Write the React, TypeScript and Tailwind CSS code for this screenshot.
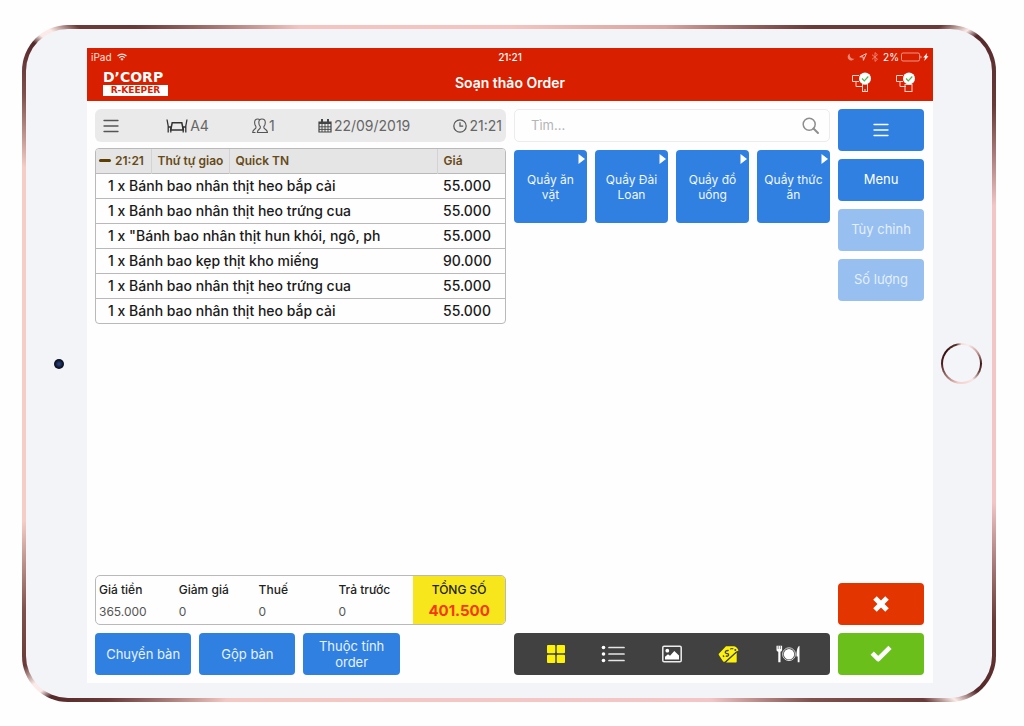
import React from 'react';

const ORDER_ITEMS = [
  { name: '1 x Bánh bao nhân thịt heo bắp cải', price: '55.000' },
  { name: '1 x Bánh bao nhân thịt heo trứng cua', price: '55.000' },
  { name: '1 x "Bánh bao nhân thịt hun khói, ngô, ph', price: '55.000' },
  { name: '1 x Bánh bao kẹp thịt kho miếng', price: '90.000' },
  { name: '1 x Bánh bao nhân thịt heo trứng cua', price: '55.000' },
  { name: '1 x Bánh bao nhân thịt heo bắp cải', price: '55.000' },
];

const TOTALS = [
  { label: 'Giá tiền', value: '365.000' },
  { label: 'Giảm giá', value: '0' },
  { label: 'Thuế', value: '0' },
  { label: 'Trả trước', value: '0' },
];

const CATEGORIES = ['Quầy ăn vặt', 'Quầy Đài Loan', 'Quầy đồ uống', 'Quầy thức ăn'];

const MenuLines = ({ className }: { className: string }) => (
  <svg className={className} viewBox="0 0 16 14" fill="none" stroke="currentColor" strokeWidth={1.3}>
    <path strokeLinecap="round" d="M1 1.5h14M1 7h14M1 12.5h14" />
  </svg>
);

const WifiIcon = () => (
  <svg className="w-3 h-2" viewBox="0 0 12 9" fill="none" stroke="currentColor" strokeWidth={1.4}>
    <path d="M1 3.4a7.2 7.2 0 0 1 10 0M2.9 5.3a4.5 4.5 0 0 1 6.2 0" />
    <path d="M4.2 6.7a2.6 2.6 0 0 1 3.6 0L6 8.7z" fill="currentColor" stroke="none" />
  </svg>
);

const TableIcon = () => (
  <svg className="w-[22px] h-4" viewBox="0 0 22 16" fill="none" stroke="#333" strokeWidth={1.3}>
    <path d="M1 1.500l1.200 6.500v6.500M2.200 9h2.600v5.500M21 1.500l-1.200 6.500v6.500M19.800 9h-2.600v5.500" />
    <path d="M6.200 4.800h9.600l1.500 7.200H4.700z" strokeWidth={1.5} />
  </svg>
);

const GuestsIcon = () => (
  <svg className="w-4 h-4" viewBox="0 0 16 16" fill="none" stroke="#555" strokeWidth={1.1} strokeLinejoin="round">
    <path d="M10 1c2 0 3.300 1.300 3.300 3.600 0 1.700-.5 3-1.400 3.900v1.400c.3 1.200 3.300 1.200 3.600 4.600H5.300c.2-3.400 2.700-3.400 3-4.600V8.500C7.300 7.600 6.800 6.300 6.800 4.600 6.800 2.300 8 1 10 1z" />
    <path d="M7.800 1.800C7.300 1.300 6.500 1 5.700 1 3.700 1 2.600 2.400 2.600 4.500c0 1.800.5 3 1.300 3.900v1.500c-.3 1.200-3 1.400-3.300 4.600h2.900" />
  </svg>
);

const CalendarIcon = () => (
  <svg className="w-3.5 h-3.5" viewBox="0 0 14 14" fill="none" stroke="#444">
    <path d="M1 3h12v10H1z" strokeWidth={1.2} />
    <path d="M1 4h12" strokeWidth={2} />
    <path d="M4 5v8M7 5v8M10 5v8M1 7.800h12M1 10.400h12" strokeWidth={0.9} />
    <path d="M4 .5v3M10 .5v3" strokeWidth={2} strokeLinecap="round" />
  </svg>
);

const ClockIcon = () => (
  <svg className="w-3.5 h-3.5" viewBox="0 0 14 14" fill="none" stroke="#555" strokeWidth={1.2}>
    <circle cx="7" cy="7" r="6.2" />
    <path d="M7 3.200V7.200h3.200" />
  </svg>
);

const MoonIcon = () => (
  <svg className="w-2 h-2" viewBox="0 0 8 8" fill="#f08a78">
    <path d="M3 .5a3.600 3.600 0 1 0 4.500 5A3.700 3.700 0 0 1 3 .5z" />
  </svg>
);

const LocationIcon = () => (
  <svg className="w-2 h-2" viewBox="0 0 8 8" fill="none" stroke="#f8c4ba" strokeWidth={1}>
    <path d="M.8 3.800L7.400.6 4.400 7.300 4.100 3.900z" />
  </svg>
);

const BluetoothIcon = () => (
  <svg className="w-2 h-2.5" viewBox="0 0 8 10" fill="none" stroke="#f08a78" strokeWidth={0.9}>
    <path d="M1 2.700l5.500 4.500L4 9.400V.6l2.500 2.200L1 7.300" />
  </svg>
);

const BatteryIcon = () => (
  <svg className="w-7 h-2.5" viewBox="0 0 28 10">
    <rect x="0.500" y="1" width="18" height="8" rx="1.500" fill="none" stroke="#f6b5a8" strokeWidth={0.8} />
    <path d="M19.500 3.500v3c1.300-.4 1.300-2.600 0-3z" fill="#f8c4ba" />
    <path d="M26.200 1l-4 4.500h1.900L23.200 9l4.300-4.700h-2z" fill="#fff" />
  </svg>
);

const DeviceStatusIcon = ({ phone }: { phone?: boolean }) => (
  <svg className="w-5 h-5" viewBox="0 0 20 20" fill="none" stroke="#ffd2ca" strokeWidth={1}>
    <path d="M8 3.500H1.500v6H8M5 9.500v5h6" />
    {phone ? <rect x="11.500" y="12" width="5" height="7.500" /> : <rect x="10" y="12.500" width="7" height="7" />}
    {phone && <path d="M13 18h2" />}
    <circle cx="14" cy="6.500" r="6" fill="#fff" stroke="none" />
    <path d="M11 6.500l2.300 2.300 4-4.300" stroke="#4cb648" strokeWidth={1.2} />
  </svg>
);

const SearchIcon = () => (
  <svg className="w-[17px] h-[17px]" viewBox="0 0 17 17" fill="none" stroke="#8e8e8e" strokeWidth={1.5}>
    <circle cx="7.200" cy="7.200" r="6" />
    <path d="M11.500 11.500l4.500 4.500" strokeWidth={1.900} strokeLinecap="round" />
  </svg>
);

const GridIcon = () => (
  <svg className="w-[18px] h-[18px]" viewBox="0 0 18 18" fill="#fdf20a">
    <rect width="8.300" height="8.300" rx="1" />
    <rect x="9.700" width="8.300" height="8.300" rx="1" />
    <rect y="9.700" width="8.300" height="8.300" rx="1" />
    <rect x="9.700" y="9.700" width="8.300" height="8.300" rx="1" />
  </svg>
);

const ListIcon = () => (
  <svg className="w-6 h-[18px]" viewBox="0 0 24 18" fill="#fff" stroke="#e6e6e6" strokeWidth={1.7}>
    <path d="M8 2.500h15M8 9h15M8 15.500h15" strokeLinecap="round" />
    <g stroke="none">
      <circle cx="2.500" cy="2.500" r="1.800" />
      <circle cx="2.500" cy="9" r="1.800" />
      <circle cx="2.500" cy="15.500" r="1.800" />
    </g>
  </svg>
);

const PictureIcon = () => (
  <svg className="w-5 h-[18px]" viewBox="0 0 20 18">
    <rect x="0.800" y="1.300" width="18.400" height="15.400" rx="1.300" fill="none" stroke="#ededed" strokeWidth={1.5} />
    <circle cx="5.300" cy="5.700" r="1.900" fill="#fff" />
    <path d="M3 14.500v-2.800l3-2.500 2 1.500 4.300-4.700 4.700 4.500v4z" fill="#fff" />
  </svg>
);

const PriceTagIcon = () => (
  <svg className="w-[22px] h-[18px]" viewBox="0 0 22 18">
    <path d="M8 1.200h7.500c2.300 0 4 1.700 5 4.300l-2.700 1.300L7 16.500c-.7.500-1.500.4-2-.3L1 10.300c-.5-.8-.4-1.500.3-2.100z" fill="#fdf20a" />
    <path d="M18.700 7.500v9c0 .6-.4 1-1 1H8z" fill="#fdf20a" />
    <path d="M10 6c-2-.9-3.300.7-2.500 1.900.8 1.100 2.300.2 3 1.300.6 1.400-1.200 2.700-2.700 1.600M5 10.500l1 1.400M10.400 4.800l-.6 1" stroke="#414141" strokeWidth={1.300} fill="none" />
    <path d="M12.300 4.300c1-.9 2.100-1 3-.4" stroke="#414141" strokeWidth={1.200} fill="none" />
    <circle cx="17.300" cy="5" r="1" fill="#414141" />
    <path d="M18.300 7.200L8 16.800" stroke="#414141" strokeWidth={0.800} />
  </svg>
);

const DishIcon = () => (
  <svg className="w-6 h-[18px]" viewBox="0 0 24 18" fill="#fff">
    <path d="M.5.800h5.600V4.800c0 1-.7 1.700-1.600 1.900v10.500H2.300V6.700C1.200 6.500.5 5.800.5 4.800z" />
    <path d="M2.200.8v3.200M4.400.8v3.200" stroke="#414141" strokeWidth={0.6} />
    <circle cx="13" cy="9.200" r="6.400" fill="none" stroke="#d8d8d8" strokeWidth={1} />
    <circle cx="13" cy="9.200" r="5.200" />
    <path d="M23.500.800v16.400h-1.800v-5.800h-1.200c0-5 .6-9.300 3-10.600z" />
  </svg>
);

const VIEW_MODES = [
  { label: 'Grid', icon: <GridIcon /> },
  { label: 'List', icon: <ListIcon /> },
  { label: 'Pictures', icon: <PictureIcon /> },
  { label: 'Prices', icon: <PriceTagIcon /> },
  { label: 'Dishes', icon: <DishIcon /> },
];

const Header = () => (
  <header className="h-[53px] bg-[#d81f00] text-white">
    <div className="grid grid-cols-3 items-center h-[18px] px-1 text-[10px] leading-none text-[#ffe3de]">
      <div className="flex items-center gap-1">
        <span>iPad</span>
        <WifiIcon />
      </div>
      <span className="text-center font-medium text-white">21:21</span>
      <div className="flex items-center justify-end gap-1">
        <MoonIcon />
        <LocationIcon />
        <BluetoothIcon />
        <div className="flex items-center gap-0.5">
          <span className="text-white">2%</span>
          <BatteryIcon />
        </div>
      </div>
    </div>
    <div className="grid grid-cols-3 items-center h-8 px-4">
      <div className="flex flex-col items-start font-['DejaVu_Sans',sans-serif] font-bold">
        <span className="text-[14px] leading-4">D’CORP</span>
        <span className="w-[65px] bg-white text-center text-[9px] leading-[11px] text-[#d81f00]">R-KEEPER</span>
      </div>
      <h1 className="text-center text-[14px] font-semibold">Soạn thảo Order</h1>
      <div className="flex justify-end gap-6 pr-0.5">
        <DeviceStatusIcon phone />
        <DeviceStatusIcon />
      </div>
    </div>
  </header>
);

const OrderPanel = () => (
  <section className="flex flex-col">
    <div className="flex items-center justify-between h-[33px] rounded-md bg-[#eaeaea] pl-2 pr-1 text-[14px] text-[#666]">
      <button type="button" aria-label="Menu" className="text-[#555]">
        <MenuLines className="w-4 h-3.5" />
      </button>
      <span className="flex items-center gap-0.5 pl-1">
        <TableIcon />
        A4
      </span>
      <span className="flex items-center gap-px">
        <GuestsIcon />1
      </span>
      <span className="flex items-center gap-0.5">
        <CalendarIcon />
        22/09/2019
      </span>
      <span className="flex items-center gap-0.5">
        <ClockIcon />
        21:21
      </span>
    </div>

    <div className="mt-1.5 overflow-hidden rounded-[4px] border border-[#b9b9b9]">
      <table className="w-full table-fixed border-collapse text-left">
        <colgroup>
          <col className="w-[55px]" />
          <col className="w-[78px]" />
          <col />
          <col className="w-[68px]" />
        </colgroup>
        <thead>
          <tr className="h-6 bg-[#e5e5e5] text-[12px] leading-4 text-[#664a17]">
            <th className="border-r border-[#d3d3d3] pl-[3px] font-semibold">
              <span className="flex items-center gap-1">
                <span className="w-3 h-[3px] rounded-full bg-[#5d3f04]" />
                21:21
              </span>
            </th>
            <th className="border-r border-[#d3d3d3] pl-1.5 font-semibold whitespace-nowrap">Thứ tự giao</th>
            <th className="border-r border-[#d3d3d3] pl-1.5 font-semibold">Quick TN</th>
            <th className="pl-1.5 font-semibold">Giá</th>
          </tr>
        </thead>
        <tbody>
          {ORDER_ITEMS.map((item, index) => (
            <tr key={index} className="h-[25px] border-t border-[#b9b9b9] text-[14px] leading-5 font-medium text-[#1a1a1a]">
              <td colSpan={3} className="pl-3 whitespace-nowrap">
                {item.name}
              </td>
              <td className="pl-1.5">{item.price}</td>
            </tr>
          ))}
        </tbody>
      </table>
    </div>

    <dl className="mt-auto grid grid-cols-[80fr_80fr_80fr_78fr_92fr] h-[50px] overflow-hidden rounded-[5px] border border-[#b9b9b9] text-[12px]">
      {TOTALS.map((total) => (
        <div key={total.label} className="flex flex-col justify-between pt-[5px] pb-[3px] pl-[3px]">
          <dt className="font-medium text-[#222]">{total.label}</dt>
          <dd className="text-[#555]">{total.value}</dd>
        </div>
      ))}
      <div className="flex flex-col justify-between bg-[#f7e61b] pt-[5px] pb-[3px] text-center">
        <dt className="font-medium text-[#222]">TỔNG SỐ</dt>
        <dd className="text-[15px] leading-5 font-bold text-[#f5380f]">401.500</dd>
      </div>
    </dl>

    <div className="mt-2 grid grid-cols-[96fr_96fr_96fr_98fr] gap-2 h-[42px] text-[13px] leading-4 text-[#e8f2ff]">
      <button type="button" className="rounded-[4px] bg-[#2f80e1]">Chuyển bàn</button>
      <button type="button" className="rounded-[4px] bg-[#2f80e1]">Gộp bàn</button>
      <button type="button" className="rounded-[4px] bg-[#2f80e1] px-2">Thuộc tính order</button>
    </div>
  </section>
);

const CatalogPanel = () => (
  <section className="flex flex-col">
    <div className="flex items-center h-[33px] rounded-[5px] border border-[#ececec] pl-4 pr-2.5">
      <input
        type="text"
        aria-label="Tìm"
        placeholder="Tìm..."
        className="flex-1 min-w-0 text-[13px] outline-none placeholder:text-[#b5b5b5]"
      />
      <button type="button" aria-label="Search">
        <SearchIcon />
      </button>
    </div>

    <div className="mt-2 grid grid-cols-4 gap-2">
      {CATEGORIES.map((category) => (
        <button
          key={category}
          type="button"
          className="relative aspect-square rounded-[4px] bg-[#2f80e1] px-1 text-[12px] leading-[15px] text-[#f2f7ff]"
        >
          <svg className="absolute top-1 right-0.5 w-[7px] h-[10px]" viewBox="0 0 7 10" fill="#fff">
            <path d="M.5 0v10L7 5z" />
          </svg>
          {category}
        </button>
      ))}
    </div>

    <nav className="mt-auto flex items-center justify-between h-[42px] rounded-[4px] bg-[#414141] pl-[33px] pr-[30px]">
      {VIEW_MODES.map((mode) => (
        <button key={mode.label} type="button" aria-label={mode.label} className="flex">
          {mode.icon}
        </button>
      ))}
    </nav>
  </section>
);

const ActionPanel = () => (
  <aside className="flex flex-col gap-2 text-[13px] text-white">
    <button type="button" aria-label="Menu" className="flex items-center justify-center h-[42px] rounded-[4px] bg-[#2f80e1]">
      <MenuLines className="w-4 h-3.5" />
    </button>
    <button type="button" className="h-[42px] rounded-[4px] bg-[#2f80e1]">Menu</button>
    <button type="button" className="h-[42px] rounded-[4px] bg-[#97bff0] text-[#e4effc]">Tùy chỉnh</button>
    <button type="button" className="h-[42px] rounded-[4px] bg-[#97bff0] text-[#e4effc]">Số lượng</button>
    <button type="button" aria-label="Cancel" className="mt-auto flex items-center justify-center h-[42px] rounded-[4px] bg-[#e23500]">
      <svg className="w-[18px] h-[18px]" viewBox="0 0 18 18" fill="none" stroke="#fff" strokeWidth={5}>
        <path strokeLinejoin="round" d="M3 3l12 12M15 3L3 15" />
      </svg>
    </button>
    <button type="button" aria-label="Confirm" className="flex items-center justify-center h-[42px] rounded-[4px] bg-[#6abf1b]">
      <svg className="w-[22px] h-[18px]" viewBox="0 0 22 18" fill="none" stroke="#fff" strokeWidth={4.600}>
        <path strokeLinejoin="round" d="M2.200 8.200l6 6L20 2.400" />
      </svg>
    </button>
  </aside>
);

const HomeButton = () => (
  <button
    type="button"
    aria-label="Home"
    className="w-[41px] h-[41px] rounded-full p-0.5 bg-[conic-gradient(#f6dcd9,#fbeeee_20deg,#c99a96_55deg,#3a1518_90deg,#6d4340_115deg,#f9e4e2_145deg,#f3cfcc_190deg,#b08581_220deg,#4a1c1e_270deg,#35100f_310deg,#5c3330_345deg,#f6dcd9)]"
  >
    <span className="block w-full h-full rounded-full bg-[#f4f5f9]" />
  </button>
);

const App = () => {
  return (
    <div className="flex min-h-screen bg-[#fefefe] pt-[25px] pr-7 pb-6 pl-[22px] font-['Inter','Liberation_Sans',sans-serif]">
      <div className="flex flex-1 rounded-[46px] p-1 bg-[conic-gradient(#f4c5c0,#d9a5a0_25deg,#6a3a38_42deg,#6a3a38_52deg,#fbeae7_54deg,#55282a_55deg,#6a3a38_62deg,#f4c5c6_72deg,#f4c5c6_106deg,#6a3a38_118deg,#55282a_125deg,#fbeae7_127deg,#6a3a38_129deg,#80504c_138deg,#f4c5c6_149deg,#f4c8c3_220deg,#6a3a38_230deg,#55282a_234deg,#fbeae7_235deg,#fbeae7_236deg,#6a3a38_238deg,#80504c_243deg,#f6cdc6_252deg,#f6cdc6_292deg,#80504c_299deg,#55282a_304deg,#fbeae7_305deg,#fbeae7_306deg,#6a3a38_308deg,#6a3a38_312deg,#f4c5c0_328deg,#f4c5c0)]">
        <div className="flex flex-1 rounded-[42px] bg-[#f3f4f8] pt-[19px] pb-[15px]">
          <div className="flex items-center justify-center w-[61px] pl-1 pb-1">
            <span className="w-2.5 h-2.5 rounded-full bg-[radial-gradient(circle,#2c4a8c,#0a0f22_60%)]" />
          </div>
          <main className="flex flex-1 flex-col bg-[#fefefe]">
            <Header />
            <div className="grid flex-1 grid-cols-[411fr_316fr_86fr] gap-2 py-2 pl-2 pr-[9px]">
              <OrderPanel />
              <CatalogPanel />
              <ActionPanel />
            </div>
          </main>
          <div className="flex items-center justify-center w-[59px] pr-0.5 pb-1">
            <HomeButton />
          </div>
        </div>
      </div>
    </div>
  );
};

export default App;
